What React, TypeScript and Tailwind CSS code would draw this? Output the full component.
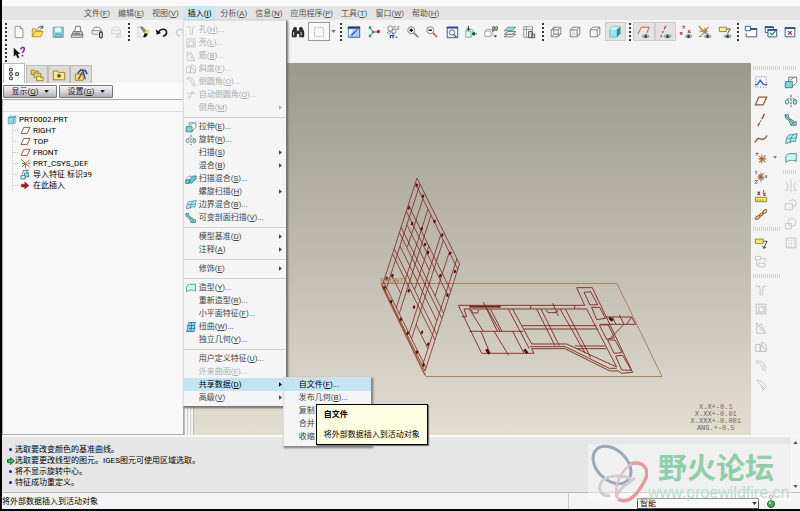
import { useState, type ReactNode } from "react";
import clsx from "clsx";

type Entry = {
  label: string;
  hotkey?: string;
  dots?: boolean;
  icon?: string;
  sub?: boolean;
  off?: boolean;
};

/* ---------- icons (16 x 16 grid) ---------- */

const icons: Record<string, ReactNode> = {
  new: <path d="M3.500 1.500h6l3 3v10h-9zM9.500 1.500v3h3" fill="#fff" stroke="#888" />,
  open: (
    <>
      <path d="M1.500 13.500v-9h4l1 1.500h5v2" fill="#f7dc7a" stroke="#a98d33" />
      <path d="M1.500 13.500l3-6h9.500l-3 6z" fill="#fbe34f" stroke="#a98d33" />
      <path d="M8 4c1.500-3 4-3 5-1.500M13.500.5v3h-3" stroke="#333" />
    </>
  ),
  save: (
    <>
      <path d="M2.500 2.500h11.500v11.500h-11.500z" fill="#7fdbe0" stroke="#5b9da4" />
      <path d="M5 3h6.500v5h-6.500z" fill="#e9fbfb" />
      <path d="M5.500 10.500h6v3h-6z" fill="#b8c9cc" stroke="#5b8f96" />
    </>
  ),
  print: (
    <>
      <path d="M5.500 7l1-5.500h5l1 5.500" fill="#fff" stroke="#666" />
      <path d="M3.500 7.500h10l1.500 4h-13z" fill="#ccc" stroke="#666" />
      <path d="M1.500 11.500h13v2.500h-13zM5 9.500h6" fill="#eee" stroke="#666" />
    </>
  ),
  mail: (
    <>
      <path d="M2.500 10.500v-4l3-4h5l3 4v2M2.500 10.500h7M2 6.500h11" fill="#eee" stroke="#888" />
      <path d="M11 14v-5c0-1.500 3-1.500 3 0v4c0 2.500-3 2.500-3 0" stroke="#222" strokeWidth="1.200" />
    </>
  ),
  mailOff: (
    <>
      <path d="M3 10V5l3-3h4l3 3v5H3zM2 6h11" fill="#f3f3f3" stroke="#d4d4d4" />
      <path d="M7 13.500h8M9 11h5" stroke="#d0d0d0" strokeWidth="1.500" />
    </>
  ),
  repaint: (
    <>
      <path d="M2 2h6l3 3v3M2 2v12h5" fill="#eee" stroke="#bbb" strokeDasharray="1 1" />
      <path d="M4 2l4 0 4 5-3 2z" fill="#888" />
      <path d="M8 14l2-5 4 1-3 4z" fill="#111" />
      <path d="M10 9l3-4 2 1-1 4z" fill="#efd936" />
    </>
  ),
  undo: (
    <>
      <path d="M4 8c2-4 8-4 9-1 1 3-1 5-4 6" stroke="#111" strokeWidth="1.800" />
      <path d="M1 5l1 6 5-2z" fill="#111" />
    </>
  ),
  redo: <path d="M12 8c-2-4-8-4-9-1-1 3 1 5 4 6M14 4v5h-5" stroke="#ccc" strokeWidth="1.500" />,
  find: (
    <>
      <path d="M1.500 13.500V8l2-5h2.500v4h4V3h2.500l2 5v5.500h-4.500v-4h-4v4z" fill="#333" stroke="#111" />
      <path d="M3 8v4M11.500 8v4" stroke="#eee" />
    </>
  ),
  marquee: <path d="M3 3h10v10H3z" fill="#fafafa" stroke="#aaa" strokeDasharray="2 1" />,
  view: (
    <>
      <path d="M1.500 2.500h13v11.500h-13z" fill="#b5cff5" stroke="#2c4f9e" />
      <path d="M1 3h14" stroke="#1f3c8a" strokeWidth="2.500" />
      <path d="M2 5h5l-5 8z" fill="#fff" />
      <path d="M5 12l4-4M8 9l4-4" stroke="#2c62b8" strokeWidth="1.600" />
    </>
  ),
  spin: (
    <>
      <path d="M3 3l4 5-4 5M7 8h6" stroke="#555" />
      <path d="M2 1.500h3v3h-3zM2 11h3v3h-3z" fill="#29a36a" />
      <circle cx="7" cy="8" r="1.500" fill="#2f6fd0" />
      <circle cx="13" cy="7.500" r="2" fill="#c22" />
    </>
  ),
  orient: (
    <>
      <circle cx="5" cy="4" r="3" stroke="#777" />
      <circle cx="9" cy="7" r="2.500" stroke="#777" />
      <path d="M9 2h2M13 2h2M12 4.500h3M7 9l3 4" stroke="#3654a8" />
      <path d="M1 9l4-2M3 11l3-3" stroke="#777" />
      <path d="M5 15v-3h3v3M11 14h2" stroke="#123a9c" strokeWidth="1.300" />
    </>
  ),
  zoomIn: (
    <>
      <circle cx="6" cy="6" r="4" fill="#f7f7e8" stroke="#777" />
      <path d="M4 6h4M6 4v4" stroke="#111" strokeWidth="1.500" />
      <path d="M9 9l5 5" stroke="#a8705a" strokeWidth="1.800" />
    </>
  ),
  zoomOut: (
    <>
      <circle cx="6" cy="6" r="4" fill="#f7f7e8" stroke="#777" />
      <path d="M4 6h4" stroke="#111" strokeWidth="1.500" />
      <path d="M9 9l5 5" stroke="#a8705a" strokeWidth="1.800" />
    </>
  ),
  refit: (
    <>
      <path d="M2.500 2.500h12v12h-12z" fill="#eef3ff" stroke="#345" />
      <path d="M2 3h13" stroke="#27448f" strokeWidth="2" />
      <circle cx="8" cy="8.500" r="3" stroke="#555" />
      <path d="M10 11l3 3" stroke="#555" strokeWidth="1.500" />
    </>
  ),
  reorient: (
    <>
      <path d="M2 7h6v7H2zM2 7l2-2h6v6l-2 3" fill="#e0f3f0" stroke="#7aaaa8" />
      <path d="M5 1v5M3.500 4l1.500 2 1.500-2" stroke="#111" />
      <path d="M15 10h-5M12 8l-3 2 3 2z" fill="#111" stroke="#164" />
    </>
  ),
  saved: (
    <>
      <path d="M1 7h7v6H1zM1 7l2-2h7v6l-2 2" fill="#fff" stroke="#999" />
      <path d="M10 2h2v3h-2zM13.500 2h2v3h-2zM10 8V6h5" stroke="#555" />
      <path d="M11 12h4l-2 2z" fill="#111" />
    </>
  ),
  layers: (
    <>
      <path d="M1.500 13.500l4-3h9l-4 3z" fill="#fff" stroke="#666" />
      <path d="M1.500 10.500l4-3h9l-4 3z" fill="#fff" stroke="#666" />
      <path d="M1.500 6.500l4-4h9l-4 4z" fill="#8ee6de" stroke="#588" />
    </>
  ),
  manager: (
    <>
      <path d="M2 2h10v12H2zM2 5h10M5 2v12" fill="#fff" stroke="#888" />
      <path d="M7.500 7.500h4v7h-4zM11.500 10.500h3v4h-3z" fill="#ddd" stroke="#444" />
    </>
  ),
  wire: (
    <path d="M2.500 5.500h8v8h-8zM5.500 2.500h8v8h-8zM2.500 5.500l3-3M10.500 5.500l3-3M10.500 13.500l3-3M2.500 13.500l3-3" stroke="#777" />
  ),
  hidden: (
    <>
      <path d="M5.500 3v7.500h8M2.500 13.500l3-3" stroke="#c4c4c4" />
      <path d="M2.500 5.500h8v8h-8zM2.500 5.500l3-3h8v8l-3 3M10.500 5.500l3-3" stroke="#777" />
    </>
  ),
  noHidden: (
    <path d="M2.500 5.500h8v8h-8zM2.500 5.500l3-3h8v8l-3 3M10.500 5.500l3-3" fill="#f9f9f9" stroke="#777" />
  ),
  shaded: (
    <>
      <path d="M2 5h8v9H2z" fill="#8ce9ea" />
      <path d="M2 5l3-3h9l-4 3z" fill="#d8fbfb" />
      <path d="M10 5l4-3v8l-4 4z" fill="#2c8d94" />
      <path d="M2 5l3-3h9v8l-4 4H2z" stroke="#5aa" strokeWidth=".7" />
    </>
  ),
  plane: <path d="M1.500 12.500l4-9h9l-4 9z" stroke="#8c5a3c" strokeWidth="1.400" />,
  axis: <path d="M12 1l-3 6M8 8.500l-.7 1.500M6.500 11l-2 4" stroke="#8c4a2c" strokeWidth="1.400" />,
  planeEye: (
    <>
      <path d="M1 10.500l4-8h9l-3 7" fill="#fbe5da" stroke="#9a5b45" />
      <path d="M6 13c2-2.500 6-2.500 8 0-2 2-6 2-8 0z" fill="#b8d8d8" stroke="#677" />
      <circle cx="10" cy="13" r="1.500" fill="#244" />
    </>
  ),
  axisEye: (
    <>
      <path d="M9 1L7 5M6 7l-1 2M4 11l-1 3" stroke="#a4533b" strokeWidth="1.300" />
      <path d="M7 13c2-2.500 6-2.500 8 0-2 2-6 2-8 0z" fill="#b8d8d8" stroke="#677" />
      <circle cx="11" cy="13" r="1.500" fill="#244" />
    </>
  ),
  pointEye: (
    <>
      <path d="M4 1l3 3M7 1L4 4M1 8l3 3M4 8l-3 3M10 6l3 3M13 6l-3 3" stroke="#a23a2a" strokeWidth="1.200" />
      <path d="M7 13c2-2.500 6-2.500 8 0-2 2-6 2-8 0z" fill="#b8d8d8" stroke="#677" />
      <circle cx="11" cy="13" r="1.500" fill="#244" />
    </>
  ),
  csysEye: (
    <>
      <path d="M2 3l10 8M12 2L4 12M2 7h9M8 3v7M1 1l1.500 2M1 13h3" stroke="#a07a45" strokeWidth="1.200" />
      <path d="M7 13c2-2.500 6-2.500 8 0-2 2-6 2-8 0z" fill="#b8d8d8" stroke="#677" />
      <circle cx="11" cy="13" r="1.500" fill="#244" />
    </>
  ),
  noteEye: (
    <>
      <path d="M1.500 2.500h8v5h-8z" fill="#f7f27a" stroke="#776" />
      <path d="M10 4.500h4l-3 5" stroke="#333" />
      <path d="M7 13c2-2.500 6-2.500 8 0-2 2-6 2-8 0z" fill="#b8d8d8" stroke="#677" />
      <circle cx="11" cy="13" r="1.500" fill="#244" />
    </>
  ),
  winNew: (
    <>
      <path d="M5.500 4.500h9v9h-12v-4" fill="#fff" stroke="#234a8a" />
      <path d="M6 4.500h9" stroke="#234a8a" strokeWidth="2" />
      <path d="M1.500 1.500h6v5h-6z" fill="#fff" stroke="#234a8a" />
    </>
  ),
  winAct: (
    <>
      <path d="M1.500 2.500h9v6h-9z" fill="#fff" stroke="#234a8a" />
      <path d="M4.500 5.500h10v8h-10z" fill="#fff" stroke="#234a8a" />
      <path d="M1 2.500h10M4 5.500h11" stroke="#234a8a" strokeWidth="2" />
      <path d="M7 9l2 2 4-4" stroke="#1a8a3a" strokeWidth="1.500" />
    </>
  ),
  winClose: (
    <>
      <path d="M2.500 3.500h11v10h-11z" fill="#fff" stroke="#234a8a" />
      <path d="M2 3.500h12" stroke="#234a8a" strokeWidth="2" />
      <path d="M6 7l4 4M10 7l-4 4" stroke="#b22" strokeWidth="1.600" />
    </>
  ),
  help: (
    <>
      <path d="M2 2v10l2.500-2 2 4 2-1-2-4h3z" fill="#111" />
      <path d="M10 4c0-3 5-3 4 0 0 2-2 2-2 4M12 10v2" stroke="#7a2a8a" strokeWidth="1.800" />
    </>
  ),
  tree: <path d="M3 1.500h3v3h-3zM3 6.500h3v3h-3zM3 11.500h3v3h-3zM10 6.500h3v3h-3z" fill="#fff" stroke="#222" />,
  folders: (
    <>
      <path d="M1.500 7.500v-5h3l1 1h4v4z" fill="#e8d45a" stroke="#8a7a2a" />
      <path d="M4.500 10.500v-5h3l1 1h4v4z" fill="#f0df6a" stroke="#8a7a2a" />
      <path d="M7.500 14.500v-5h3l1 1h3.500v4z" fill="#fbee80" stroke="#8a7a2a" />
    </>
  ),
  favorite: (
    <>
      <path d="M1.500 13.500v-10h5l1 1.500h7v8.500z" fill="#f9ef74" stroke="#8a7a2a" />
      <path d="M8 6.500v5M5.500 9h5M6.500 7.500l3 3M9.500 7.500l-3 3" stroke="#27328a" />
    </>
  ),
  connect: (
    <>
      <path d="M1.500 14v-7h9v7z" fill="#f6e76a" stroke="#887a2a" />
      <path d="M4 6l4-4 5 1 2 4" stroke="#234a8a" strokeWidth="1.800" />
      <path d="M10 4l-5 9" stroke="#803a2a" strokeWidth="1.500" />
      <path d="M10 3l3 10" stroke="#445" strokeWidth="1.500" />
    </>
  ),
  part: (
    <>
      <path d="M2 4h9v10H2z" fill="#84dfe8" stroke="#3a8a94" />
      <path d="M2 4l2-2h10l-3 2zM11 4l3-2v9l-3 3z" fill="#c6f5f7" stroke="#3a8a94" />
    </>
  ),
  csys: (
    <path d="M8 8L2 2M8 8l6-5M8 8v7M8 8H3M8 8l6 5M8 8l-5 5M12 8h3" stroke="#a2602c" strokeWidth="1.400" />
  ),
  importFeat: (
    <>
      <path d="M6.500 5.500h6v6h-6z" fill="#8ae0e0" stroke="#256" />
      <path d="M1.500 9.500h6v5h-6zM3 8l2-6h8M10 1v4" fill="#d6f3f3" stroke="#256" />
    </>
  ),
  insertHere: <path d="M2 6h5V3l6 5-6 5v-3H2z" fill="#c1121c" stroke="#700" strokeWidth=".6" />,
  curveSketch: (
    <>
      <path d="M2 2h12v12H2z" stroke="#3a62c0" strokeDasharray="1 2" />
      <path d="M1 11h3l3-5 3 4 2 1h3" stroke="#2a60c8" strokeWidth="1.500" />
    </>
  ),
  curve: <path d="M1 12c3-6 5-5 7-4s4 1 7-4" stroke="#8c4a2c" strokeWidth="1.400" />,
  point: (
    <>
      <path d="M2 2l3 3M5 2L2 5" stroke="#a23a2a" strokeWidth="1.200" />
      <path d="M9 4v10M5 9h9M6 6l7 7M13 5l-7 8" stroke="#a8692c" strokeWidth="1.200" />
    </>
  ),
  csysTool: (
    <>
      <path d="M8 3v10M4 8h8M5 5l6 6M11 4l-6 7" stroke="#8c5a3c" strokeWidth="1.200" />
      <path d="M1 1l1.500 2L4 1M2.500 3v2M1 12h3l-3 3h3M13 6l2 3M15 6l-2 3" stroke="#555" strokeWidth=".9" />
    </>
  ),
  analysis: (
    <>
      <path d="M1.500 9.500h13v5h-13z" fill="#f3ec5a" stroke="#8a8032" />
      <path d="M4 12v2M7 12v2M10 12v2" stroke="#8a8032" />
      <path d="M4 3l3 4M7 3L4 7M11 1v2M10 4l3 4M13 4l-2 4" stroke="#93402a" strokeWidth="1.200" />
    </>
  ),
  link: (
    <path d="M2 13c-1-2 2-5 4-4s0 4-4 4zM6 9c0-2 3-4 4-3s-1 4-4 3zM10 6c-1-2 3-5 4-4s0 5-4 4z" fill="#f2dcae" stroke="#9a5a1e" strokeWidth="1.200" />
  ),
  note: (
    <>
      <path d="M1.500 3.500h9v5h-9z" fill="#f6ea55" stroke="#8a8032" />
      <path d="M11 6h4l-4 8M10 11l1 3 3-1" stroke="#333" />
    </>
  ),
  noteOff: <path d="M1.500 1.500h6v4h-6zM5.500 9.500h7v4h-7zM8 4h5v4M3 6v6h2" stroke="#c4c4c4" />,
  extrude: (
    <>
      <path d="M5.500 7V2.500h9v6l-5 5" fill="#fff" stroke="#567" />
      <path d="M1.500 7.500h8v7h-8z" fill="#7fd8d4" stroke="#2a7a7a" />
      <path d="M7 6l4-3" stroke="#567" />
    </>
  ),
  revolve: (
    <>
      <path d="M8 1v14" stroke="#444" strokeDasharray="3 1" />
      <ellipse cx="3.500" cy="9" rx="2" ry="2.500" fill="#dff" stroke="#477" />
      <path d="M3.500 6l3-1M10 5l4 2" stroke="#477" />
      <ellipse cx="12.500" cy="9" rx="2" ry="2.800" fill="#a5dede" stroke="#477" />
    </>
  ),
  sweep: (
    <>
      <path d="M1 2h4v3l7 5h2v4H8l-2-5-4-3z" fill="#9fe3da" stroke="#377" />
      <path d="M2 3l10 10M8 14l4-4" stroke="#377" />
    </>
  ),
  boundary: (
    <>
      <path d="M2 13c0-5 2-8 4-10 3 1 6-1 9-1-1 4-1 6-2 9-4-2-7 2-11 2z" fill="#b9eff0" stroke="#2e8a90" />
      <path d="M4 8c3-2 6 1 10-2M7 13c0-4 1-7 4-10" stroke="#2e8a90" />
    </>
  ),
  style: <path d="M2 13V7c0-3 3-4 6-4h6v9c-4-2-8-2-12 1z" fill="#cdf6f4" stroke="#3a8a8a" />,
  blend: (
    <>
      <path d="M1 9h5v5H1zM6 9l4-5h5v4l-7 6z" fill="#56cdd0" stroke="#2a8088" />
      <path d="M2 7l4-3 3 1" stroke="#58a" />
    </>
  ),
  warp: (
    <>
      <path d="M5 2h9c-3 4 1 8-2 12H2C5 10 2 6 5 2z" fill="#8fd4ee" stroke="#1f6aa0" />
      <path d="M4 6h9M5 10h8M9 2c-2 4 1 8-2 12" stroke="#1f6aa0" />
    </>
  ),
  mirrorOff: <path d="M8 1v14M2 3c3 3 3 7 0 10M14 3c-3 3-3 7 0 10M2 13h3M11 13h3" stroke="#c4c4c4" />,
  mergeOff: <path d="M1.500 6.500h8v7h-8zM6 5a4 4 0 1 1 4 5" stroke="#c0c0c0" />,
  trimOff: (
    <>
      <circle cx="9" cy="6" r="4.500" stroke="#c4c4c4" />
      <path d="M1.500 7.500h7v6h-7z" stroke="#c4c4c4" />
    </>
  ),
  patternOff: (
    <>
      <path d="M2.500 2.500h11v11h-11z" stroke="#bbb" />
      <path d="M5 5.500h7M5 8.500h7M5 11.500h7" stroke="#aaa" strokeDasharray="1 2" />
    </>
  ),
  holeOff: <path d="M2 3.500h4l1 3v7h3v-7l1-3h3" stroke="#c0c0c0" />,
  shellOff: <path d="M2.500 2.500h11v11h-11zM5.500 5.500h6v6h-6zM2.500 13.500l3-2" stroke="#b8b8b8" />,
  ribOff: <path d="M3 2v12h10zM3 8l5-5 5 11M6 9l3 3" stroke="#c0c0c0" />,
  draftOff: <path d="M2 5h5v8H2zM7 13l2-11 5 4v7zM9 6l4 5" stroke="#b8b8b8" />,
  roundOff: <path d="M3 2c7 0 10 4 10 11M4 4c3 1 6 4 6 8l3 2M3 2v3" stroke="#b8b8b8" />,
  chamferOff: <path d="M3 2c5 1 9 4 11 8l-4 4c0-4-3-8-7-10M9 9l4 4" stroke="#c0c0c0" />,
  autoRound: <path d="M3 12C7 10 9 7 10 2M2 6h11M8 4l5 1M5 14l3-5" stroke="#c4c4c4" />,
};

function Icon({ name, className = "size-4" }: { name: string; className?: string }) {
  return (
    <svg viewBox="0 0 16 16" className={clsx("shrink-0", className)} fill="none" aria-hidden="true">
      {icons[name]}
    </svg>
  );
}

/* ---------- data ---------- */

const menuLeft = [
  ["文件", "F"],
  ["编辑", "E"],
  ["视图", "V"],
];
const menuRight = [
  ["分析", "A"],
  ["信息", "N"],
  ["应用程序", "P"],
  ["工具", "T"],
  ["窗口", "W"],
  ["帮助", "H"],
];

const toolbar = [
  ["new", "open", "save", "print", "mail", "mailOff"],
  ["repaint", "undo", "redo", "layers", "manager", "part", "saved", "wire", "find", "marquee"],
  ["view", "spin", "orient", "zoomIn", "zoomOut", "refit", "reorient", "saved", "layers", "manager"],
  ["wire", "hidden", "noHidden", "shaded"],
  ["planeEye", "axisEye", "pointEye", "csysEye", "noteEye"],
  ["winNew", "winAct", "winClose"],
];
const pressed = ["shaded", "planeEye", "axisEye"];

const datumTools = [
  ["curveSketch", "plane", "axis", "curve", "point", "csysTool", "analysis", "link"],
  ["note", "noteOff"],
  ["holeOff", "shellOff", "ribOff", "draftOff", "roundOff", "chamferOff"],
];
const featureTools = [
  ["extrude", "revolve", "sweep", "boundary", "style"],
  ["mirrorOff", "mergeOff", "trimOff", "patternOff"],
];

const insertMenu: Entry[][] = [
  [
    { label: "孔", hotkey: "H", dots: true, icon: "holeOff", off: true },
    { label: "壳", hotkey: "L", dots: true, icon: "shellOff", off: true },
    { label: "筋", hotkey: "B", dots: true, icon: "ribOff", off: true },
    { label: "斜度", hotkey: "F", dots: true, icon: "draftOff", off: true },
    { label: "倒圆角", hotkey: "O", dots: true, icon: "roundOff", off: true },
    { label: "自动倒圆角", hotkey: "O", dots: true, icon: "autoRound", off: true },
    { label: "倒角", hotkey: "M", sub: true, off: true },
  ],
  [
    { label: "拉伸", hotkey: "E", dots: true, icon: "extrude" },
    { label: "旋转", hotkey: "R", dots: true, icon: "revolve" },
    { label: "扫描", hotkey: "S", sub: true },
    { label: "混合", hotkey: "B", sub: true },
    { label: "扫描混合", hotkey: "S", dots: true, icon: "blend" },
    { label: "螺旋扫描", hotkey: "H", sub: true },
    { label: "边界混合", hotkey: "B", dots: true, icon: "boundary" },
    { label: "可变剖面扫描", hotkey: "V", dots: true, icon: "sweep" },
  ],
  [
    { label: "模型基准", hotkey: "D", sub: true },
    { label: "注释", hotkey: "A", sub: true },
  ],
  [{ label: "修饰", hotkey: "E", sub: true }],
  [
    { label: "造型", hotkey: "Y", dots: true, icon: "style" },
    { label: "重新造型", hotkey: "R", dots: true },
    { label: "小平面特征", hotkey: "F", dots: true },
    { label: "扭曲", hotkey: "W", dots: true, icon: "warp" },
    { label: "独立几何", hotkey: "Y", dots: true },
  ],
  [
    { label: "用户定义特征", hotkey: "U", dots: true },
    { label: "外来曲面", hotkey: "F", dots: true, off: true },
    { label: "共享数据", hotkey: "D", sub: true },
    { label: "高级", hotkey: "V", sub: true },
  ],
];

const shareMenu: Entry[] = [
  { label: "自文件", hotkey: "F", dots: true },
  { label: "发布几何", hotkey: "B", dots: true },
  { label: "复制" },
  { label: "合并" },
  { label: "收缩" },
];

const treeItems = [
  ["plane", "RIGHT"],
  ["plane", "TOP"],
  ["plane", "FRONT"],
  ["csys", "PRT_CSYS_DEF"],
  ["importFeat", "导入特征 标识39"],
  ["insertHere", "在此插入"],
];

const messages = [
  "选取要改变颜色的基准曲线。",
  "选取要更改线型的图元。IGES图元可使用区域选取。",
  "将不显示旋转中心。",
  "特征成功重定义。",
];

/* ---------- menus ---------- */

function Label({ text, hotkey, dots }: { text: string; hotkey?: string; dots?: boolean }) {
  return (
    <span className="whitespace-nowrap">
      {text}
      {hotkey && (
        <>
          (<u>{hotkey}</u>)
        </>
      )}
      {dots && "..."}
    </span>
  );
}

function MenuRow({ item, active }: { item: Entry; active?: boolean }) {
  return (
    <button
      type="button"
      role="menuitem"
      disabled={item.off}
      className={clsx(
        "flex h-[13px] w-full items-center pr-1 text-left",
        active ? "bg-[#c3e5f3] text-black" : item.off ? "text-[#adadad]" : "text-[#444]"
      )}
    >
      <span className="flex w-[15px] shrink-0 pl-px">
        {item.icon && <Icon name={item.icon} className="size-3" />}
      </span>
      <Label text={item.label} hotkey={item.hotkey} dots={item.dots} />
      {item.sub && (
        <svg viewBox="0 0 4 6" className="ml-auto h-[5px] w-[3px]" aria-hidden="true">
          <path d="M0 0l4 3-4 3z" fill="currentColor" />
        </svg>
      )}
    </button>
  );
}

function ShareMenu() {
  return (
    <div
      role="menu"
      className="absolute -top-px left-full z-20 -ml-[3px] w-[89px] border border-[#ddd] border-r-[#888] border-b-[#888] bg-[#f5f5f5] pb-[3px] shadow-[1px_1px_2px_#777]"
    >
      {shareMenu.map((item, i) => (
        <MenuRow key={item.label} item={item} active={i === 0} />
      ))}
      <div
        role="tooltip"
        className="absolute top-[26px] left-8 border border-black bg-[#ffffe3] px-[7px] py-[3px] whitespace-nowrap text-black shadow-[1px_1px_1px_#777]"
      >
        <p className="font-bold leading-[13px]">自文件</p>
        <p className="mt-[7px] leading-[13px]">将外部数据插入到活动对象</p>
      </div>
    </div>
  );
}

function InsertMenu() {
  return (
    <div
      role="menu"
      className="absolute top-full left-0 z-10 w-[104px] border border-[#ddd] border-r-[#777] border-b-[#777] bg-[#f5f5f5] py-[2px] shadow-[1px_1px_2px_#666]"
    >
      {insertMenu.map((group, g) => (
        <div key={g}>
          {g > 0 && <hr className="mt-[3px] mb-[2px] border-[#cfcfcf]" />}
          {group.map((item) => {
            const active = item.label === "共享数据";
            return (
              <div key={item.label} className="relative">
                <MenuRow item={item} active={active} />
                {active && <ShareMenu />}
              </div>
            );
          })}
        </div>
      ))}
    </div>
  );
}

function MenuBar() {
  const [open, setOpen] = useState(true);
  const itemCls = "h-[14px] px-[4px] text-[#555]";
  return (
    <nav className="flex h-[14px] shrink-0 items-center bg-[#e4e4e4] pl-[78px]">
      {menuLeft.map(([text, key]) => (
        <button key={text} type="button" className={itemCls}>
          <Label text={text} hotkey={key} />
        </button>
      ))}
      <div className="relative">
        <button
          type="button"
          aria-expanded={open}
          onClick={() => setOpen(!open)}
          className="h-[14px] bg-[#c9e8f4] px-[5px] text-black"
        >
          <Label text="插入" hotkey="I" />
        </button>
        {open && <InsertMenu />}
      </div>
      {menuRight.map(([text, key]) => (
        <button key={text} type="button" className={itemCls}>
          <Label text={text} hotkey={key} />
        </button>
      ))}
    </nav>
  );
}

/* ---------- toolbars ---------- */

function Grip() {
  return (
    <div className="flex w-[10px] shrink-0 justify-center first:w-[7px]">
      <span className="h-[18px] border-l-2 border-dotted border-[#333]" />
    </div>
  );
}

function Toolbar() {
  return (
    <div className="flex h-[23px] shrink-0 items-center">
      {toolbar.map((group, g) => (
        <div key={g} className="contents">
          <Grip />
          {group.map((name, i) => (
            <button
              key={name + i}
              type="button"
              aria-label={name}
              className={clsx(
                "flex h-[19px] min-w-0 flex-1 items-center justify-center",
                pressed.includes(name) && "border border-[#ccc] bg-[#e3e3e3]",
                name === "marquee" && "border border-[#999] bg-[#fafafa]"
              )}
            >
              <Icon name={name} className="size-[14px]" />
            </button>
          ))}
          {g === 1 && (
            <span className="flex w-2 shrink-0 justify-center">
              <svg viewBox="0 0 6 4" className="h-[3px] w-[5px]" aria-hidden="true">
                <path d="M0 0h6L3 4z" fill="#777" />
              </svg>
            </span>
          )}
        </div>
      ))}
    </div>
  );
}

function SideTools({ groups }: { groups: string[][] }) {
  return (
    <div className="flex flex-col">
      {groups.map((group, g) => (
        <div key={g}>
          <div className="flex h-[9px] items-center pr-[3px]">
            <span className="h-[4px] w-full bg-[repeating-linear-gradient(90deg,#d2d2d2_0_1px,transparent_1px_2px)]" />
          </div>
          {group.map((name) => (
            <button key={name} type="button" aria-label={name} className="flex h-[19px] w-full items-center gap-[5px] pl-px">
              <Icon name={name} className="size-[14px]" />
              {name === "point" && (
                <svg viewBox="0 0 6 4" className="h-[3px] w-[4px]" aria-hidden="true">
                  <path d="M0 0h6L3 4z" fill="#777" />
                </svg>
              )}
            </button>
          ))}
        </div>
      ))}
    </div>
  );
}

/* ---------- model tree ---------- */

function ModelTree() {
  const btn =
    "flex h-[13px] w-[54px] items-center justify-center gap-[5px] rounded-[1px] border border-[#777] bg-linear-to-b from-[#f5f5f7] via-[#d6d6dc] to-[#aeaeb6] text-[#222]";
  return (
    <aside className="flex w-[182px] shrink-0 flex-col">
      <div className="flex h-5 items-end">
        {["tree", "folders", "favorite", "connect"].map((name, i) => (
          <button
            key={name}
            type="button"
            aria-label={name}
            className={clsx(
              "flex w-[22px] items-center justify-center border border-b-0 border-[#bbb]",
              i === 0 ? "mx-px h-5 bg-white" : "h-[18px] bg-[#dedad8]"
            )}
          >
            <Icon name={name} className="size-[14px]" />
          </button>
        ))}
      </div>
      <div className="flex h-4 items-center gap-[2px] bg-[#fbfbfb] pl-px">
        {[
          ["显示", "Q"],
          ["设置", "G"],
        ].map(([text, key]) => (
          <button key={text} type="button" className={btn}>
            <Label text={text} hotkey={key} />
            <svg viewBox="0 0 6 4" className="h-[3px] w-[5px]" aria-hidden="true">
              <path d="M0 0h6L3 4z" fill="#111" />
            </svg>
          </button>
        ))}
      </div>
      <div className="flex-1 border border-[#aaa] bg-[#f8f8f8] text-black">
        <div className="h-3 border-b border-[#ddd]" />
        <p className="mt-[2px] flex h-[11px] items-center gap-[2px] pl-1">
          <Icon name="part" className="size-[10px]" />
          PRT0002.PRT
        </p>
        <ul className="ml-[9px] border-l border-dotted border-[#ccc]">
          {treeItems.map(([icon, text]) => (
            <li key={text} className="flex h-[11px] items-center gap-[2px] whitespace-nowrap">
              <span className="w-[5px] border-t border-dotted border-[#ccc]" />
              <Icon name={icon} className="size-[11px]" />
              {text}
            </li>
          ))}
        </ul>
      </div>
    </aside>
  );
}

/* ---------- 3D view ---------- */

// corner points of the upright wing, s runs top -> right, t runs top -> left
const at = (s: number, t: number) =>
  `${(417 + 42.5 * s - 34.5 * t).toFixed(1)} ${(178 + 86 * s + 107 * t).toFixed(1)}`;

// [from s, from t, to s, to t]
const ribLines = [
  [0, 0, 0, 1], [0.07, 0, 0.07, 1], [0.3, 0.05, 0.3, 0.97], [0.37, 0.05, 0.37, 0.97],
  [0.6, 0.05, 0.6, 0.97], [0.66, 0.05, 0.66, 0.97], [0.94, 0, 0.94, 1], [1, 0, 1, 1],
  [0, 0, 1, 0], [0, 0.05, 1, 0.05], [0, 0.25, 1, 0.25], [0, 0.31, 1, 0.31],
  [0, 0.46, 1, 0.46], [0, 0.51, 1, 0.51], [0, 0.66, 1, 0.66], [0, 0.71, 1, 0.71],
  [0, 0.97, 1, 0.97], [0, 1, 1, 1],
  [0.18, 0.05, 0.18, 0.5], [0.48, 0.25, 0.48, 0.66], [0.8, 0.05, 0.8, 0.46],
  [0.07, 0.38, 0.6, 0.38], [0.07, 0.58, 0.94, 0.58], [0.07, 0.84, 0.3, 0.84], [0.66, 0.84, 0.94, 0.84],
];
const ribs = ribLines.map(([s1, t1, s2, t2]) => `M${at(s1, t1)}L${at(s2, t2)}`).join("");

const fasteners = [
  [0.03, 0.03], [0.17, 0.02], [0.45, 0.03], [0.62, 0.02], [0.82, 0.03], [0.97, 0.08],
  [0.02, 0.25], [0.14, 0.3], [0.3, 0.22], [0.42, 0.27], [0.5, 0.28], [0.78, 0.27],
  [0.03, 0.9], [0.1, 0.82], [0.04, 0.98], [0.2, 0.98], [0.42, 0.97], [0.58, 0.97],
  [0.8, 0.97], [0.95, 0.97], [0.4, 0.72], [0.55, 0.75], [0.78, 0.8], [0.92, 0.8], [0.97, 0.3],
].map(([s, t]) => `M${at(s, t)}l-1 3`).join("");

function ModelView() {
  return (
    <section className="relative min-w-0 flex-1 bg-linear-to-b from-[#9c998d] via-[#bebbae] to-[#e2ded0]">
      <svg viewBox="194 63 557 372" className="absolute inset-0 size-full" fill="none" role="img" aria-label="model">
        <path d="M381 283.500H617L662 376.500H426Z" stroke="#a8835c" />
        <path d="M382 286L425 375" stroke="#a8563c" strokeWidth="1.500" />
        <g stroke="#7d2420" strokeWidth=".8">
          <path d={ribs} />
          <path d={fasteners} stroke="#560f0f" strokeWidth="2" />
        </g>
        {/* flat wing */}
        <g transform="translate(440 270) scale(.3333)" stroke="#7d2420" strokeWidth="2.700">
          <path d="M55 106H434L410 53H457L578 307L545 310L535 303H510L375 236H275L282 250H125Z" />
          <path d="M72 117H440M65 140H80L72 117M88 184H250M88 117L130 184M123 184L150 250M162 184L206 256M130 96L172 184M142 117L180 184M151 117L186 184M218 184L252 250" />
          <path d="M205 117L268 236M218 117L275 222H380L530 291L440 117M247 167H470M252 177H474M290 117L345 227M303 117L358 227M360 117L436 250M376 117L452 262M270 230H376L508 295H530M405 228H494M412 236H498" />
          <path d="M432 67L452 65L473 104L450 105ZM455 112H479L496 145L470 149ZM478 165H505L523 203L500 208ZM503 210H525L546 248L522 250ZM527 258L548 256L574 301L545 300Z" />
          <path d="M497 141H575L587 163H480M517 141L528 163M538 135L552 163L510 206M575 141L560 163M272 106V117M404 106V117M318 120L324 128H350L354 120M338 100L355 138M94 120L99 129H113L116 120" />
          <path d="M88 110H182" strokeWidth="6" />
          <path d="M139 238L148 252M253 238L262 250M508 143L518 152" stroke="#4a0c0c" strokeWidth="8" />
        </g>
        <text x="380" y="283" className="fill-[#94804f] font-['Liberation_Mono'] text-[8px]">
          FRONT
        </text>
      </svg>
      <div className="absolute right-[10px] bottom-[3px] text-center font-['Liberation_Mono'] text-[7px] leading-[7px] text-[#6d6a60]">
        <p>X.X+-0.1</p>
        <p>X.XX+-0.01</p>
        <p>X.XXX+-0.001</p>
        <p>ANG.+-0.5</p>
      </div>
    </section>
  );
}

/* ---------- bottom ---------- */

function Watermark() {
  return (
    <div className="pointer-events-none absolute right-[8px] bottom-[8px] z-10 flex h-[57px] w-[204px] items-start bg-white/40">
      <svg viewBox="0 0 60 60" className="size-[60px] shrink-0" fill="none" aria-hidden="true">
        <ellipse cx="24" cy="21" rx="15" ry="22" transform="rotate(-46 24 21)" stroke="#9aa8b8" strokeWidth="3" />
        <path d="M43 35C34 30 14 31 12 41C10 49 17 53 22 51M28 53C31 44 39 40 47 34" stroke="#cfcfd2" strokeWidth="3" />
        <path d="M42 20C56 16 62 26 57 36S42 62 30 55" stroke="#e59a9e" strokeWidth="3.500" />
        <path d="M44 20C36 24 28 36 28 48C28 52 29 54 31 55" stroke="#dcc4c8" strokeWidth="2.500" />
      </svg>
      <div className="flex-1">
        <p className="pl-[10px] font-['Noto_Sans_CJK_SC'] text-[29px] leading-[44px] font-bold whitespace-nowrap text-[#8fceaa]">
          野火论坛
        </p>
        <p className="-mt-[4px] font-['Liberation_Sans'] text-base leading-[18px] whitespace-nowrap text-[#bcdccf]">
          www.proewildfire.cn
        </p>
      </div>
    </div>
  );
}

function Messages() {
  return (
    <section className="flex h-14 shrink-0 border-b border-[#bbb] bg-[#e6e6e6]">
      <ul className="flex-1 pt-[7px] pl-[4px] text-black">
        {messages.map((msg, i) => (
          <li key={msg} className="flex h-[11px] items-center">
            <span className="flex w-[9px] justify-center">
              {i === 1 ? (
                <svg viewBox="0 0 8 8" className="size-2" aria-hidden="true">
                  <path d="M.5 2.500h3v-2l4 3.500-4 3.500v-2h-3z" fill="#2cc25a" stroke="#0b5a22" strokeWidth=".8" />
                </svg>
              ) : (
                <span className="size-[3px] rounded-full bg-[#1a1aa8]" />
              )}
            </span>
            {msg}
          </li>
        ))}
      </ul>
      <div className="flex w-[9px] flex-col items-center justify-between bg-[#f4f4f4] py-1">
        <svg viewBox="0 0 6 4" className="h-[3px] w-[5px]" aria-hidden="true">
          <path d="M0 4h6L3 0z" fill="#555" />
        </svg>
        <svg viewBox="0 0 6 4" className="h-[3px] w-[5px]" aria-hidden="true">
          <path d="M0 0h6L3 4z" fill="#555" />
        </svg>
      </div>
    </section>
  );
}

function StatusBar() {
  return (
    <footer className="flex h-4 shrink-0 items-center bg-[#f4f4f4] text-black">
      <span className="flex-1">将外部数据插入到活动对象</span>
      <span className="mr-[68px] h-full border-l border-[#ccc]" />
      <div className="relative mt-1 flex items-center">
        <select
          aria-label="filter"
          className="h-[11px] w-[122px] appearance-none border border-[#555] bg-[#fafafa] pl-[2px] leading-[9px]"
        >
          <option>智能</option>
        </select>
        <svg viewBox="0 0 6 4" className="pointer-events-none absolute right-[2px] h-[3px] w-[5px]" aria-hidden="true">
          <path d="M0 0h6L3 4z" fill="#333" />
        </svg>
      </div>
      <svg viewBox="0 0 10 14" className="mr-6 ml-[7px] h-[14px] w-[10px]" aria-hidden="true">
        <path d="M3.500 1h3v3h-3z" fill="#fff" stroke="#c77" />
        <path d="M5 4v5" stroke="#555" />
        <circle cx="5" cy="10" r="3.500" fill="#3fae4c" stroke="#1f6a2a" />
        <circle cx="4" cy="9" r="1" fill="#c8f5c8" />
      </svg>
    </footer>
  );
}

export default function App() {
  return (
    <div className="relative flex h-screen min-h-[480px] flex-col overflow-hidden border-b-2 border-l-2 border-black bg-[#f4f4f4] font-['Roboto','Noto_Sans_CJK_SC',sans-serif] text-[8px] leading-[11px]">
      <div className="h-[6px] shrink-0 bg-[#fafafa]" />
      <MenuBar />
      <Toolbar />
      <div className="flex h-5 shrink-0 items-center">
        <Grip />
        <button type="button" aria-label="help" className="flex w-[19px] justify-center">
          <Icon name="help" className="size-[14px]" />
        </button>
      </div>
      <main className="flex min-h-0 flex-1">
        <ModelTree />
        <div className="w-[10px] shrink-0 border-x border-[#bbb] px-[2px]">
          <div className="h-full border-x border-[#ccc]" />
        </div>
        <ModelView />
        <div className="grid w-[49px] shrink-0 grid-cols-[30px_1fr] pl-[2px]">
          <SideTools groups={datumTools} />
          <SideTools groups={featureTools} />
        </div>
      </main>
      <div className="h-[2px] shrink-0 bg-[#f8f8f8]" />
      <Messages />
      <StatusBar />
      <Watermark />
    </div>
  );
}
